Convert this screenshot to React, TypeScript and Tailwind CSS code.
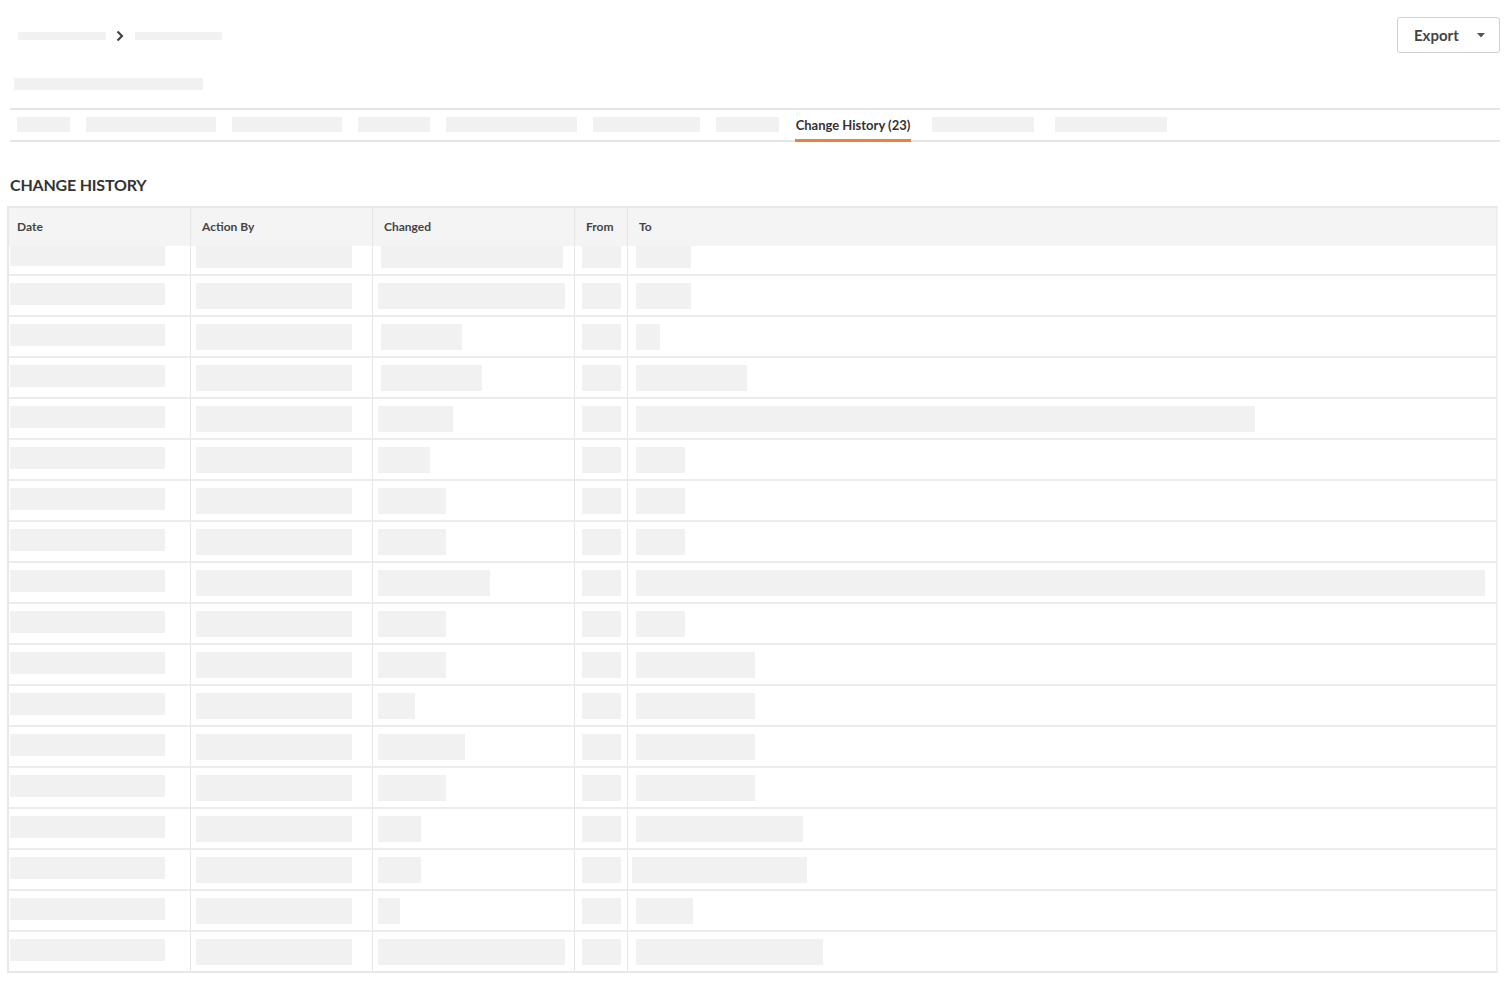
import React from "react";

type Row = {
  h: number;
  changed: [number, number];
  to: [number, number];
};

const rows: Row[] = [
  { h: 28, changed: [8, 182], to: [8, 55] },
  { h: 41, changed: [5, 187], to: [8, 55] },
  { h: 41, changed: [8, 81], to: [8, 24] },
  { h: 41, changed: [8, 101], to: [8, 111] },
  { h: 41, changed: [5, 75], to: [8, 619] },
  { h: 41, changed: [5, 52], to: [8, 49] },
  { h: 41, changed: [5, 68], to: [8, 49] },
  { h: 41, changed: [5, 68], to: [8, 49] },
  { h: 41, changed: [5, 112], to: [8, 849] },
  { h: 41, changed: [5, 68], to: [8, 49] },
  { h: 41, changed: [5, 68], to: [8, 119] },
  { h: 41, changed: [5, 37], to: [8, 119] },
  { h: 41, changed: [5, 87], to: [8, 119] },
  { h: 41, changed: [5, 68], to: [8, 119] },
  { h: 41, changed: [5, 43], to: [8, 167] },
  { h: 41, changed: [5, 43], to: [4, 175] },
  { h: 41, changed: [5, 22], to: [8, 57] },
  { h: 41, changed: [5, 187], to: [8, 187] },
];

const tabs = [
  [17, 53],
  [86, 130],
  [232, 110],
  [358, 72],
  [446, 131],
  [593, 107],
  [716, 63],
];

function Ph({ w, h, ml }: { w: number; h: number; ml: number }) {
  return (
    <div
      className="bg-[#f1f1f1]"
      style={{ width: w, height: h, marginLeft: ml }}
    />
  );
}

export default function App() {
  return (
    <div
      className="w-[1504px] h-[982px] bg-white overflow-hidden text-[#333]"
      style={{ fontFamily: "Lato, 'Open Sans', sans-serif" }}
    >
      {/* Top bar */}
      <div className="flex items-start justify-between pt-[17px]">
        <div className="flex items-center pl-[18px] pt-[13px] gap-[9px]">
          <div className="w-[88px] h-[8px] bg-[#f1f1f1]" />
          <svg width="8" height="12" viewBox="0 0 8 12" className="mx-[1px]">
            <path d="M1.5 1.5 L6 6 L1.5 10.5" stroke="#444" strokeWidth="2.2" fill="none" />
          </svg>
          <div className="w-[87px] h-[8px] bg-[#f1f1f1] ml-[1px]" />
        </div>
        <button className="mr-[4px] w-[103px] h-[36px] border border-[#d0d0d0] rounded-[3px] flex items-center pl-[16px] text-[15px] font-bold text-[#444]">
          Export
          <svg width="8" height="5" viewBox="0 0 8 5" className="ml-[18px]">
            <path d="M0 0 L8 0 L4 4.5 Z" fill="#555" />
          </svg>
        </button>
      </div>

      {/* Title placeholder */}
      <div className="pl-[14px] mt-[25px]">
        <div className="w-[189px] h-[12px] bg-[#f1f1f1]" />
      </div>

      {/* Tabs */}
      <div className="ml-[10px] mr-[4px] mt-[18px] h-[34px] border-t-2 border-b-2 border-[#e4e4e4] relative">
        {tabs.map(([x, w], i) => (
          <div
            key={i}
            className="absolute top-[7px] h-[15px] bg-[#f1f1f1]"
            style={{ left: x - 10, width: w }}
          />
        ))}
        <div className="absolute left-[785px] top-0 h-[32px] w-[116px] flex flex-col items-center">
          <div className="text-[13px] font-bold text-[#333] leading-none mt-[9px] whitespace-nowrap">
            Change History (23)
          </div>
          <div className="absolute bottom-0 left-0 right-0 h-[3px] bg-[#f07e3d]" />
        </div>
        <div className="absolute top-[7px] h-[15px] bg-[#f1f1f1] left-[922px] w-[102px]" />
        <div className="absolute top-[7px] h-[15px] bg-[#f1f1f1] left-[1045px] w-[112px]" />
      </div>

      {/* Section heading */}
      <div className="pl-[10px] mt-[35px] text-[16px] font-bold text-[#333] tracking-[-0.2px] leading-none">
        CHANGE HISTORY
      </div>

      {/* Table */}
      <div className="ml-[7px] w-[1491px] mt-[13px] border-2 border-[#e8e8e8] border-r-[#efefef]">
        <div className="grid grid-cols-[182px_182px_202px_53px_1fr] h-[38px] bg-[#f4f4f4] text-[12px] font-bold text-[#444]">
          <div className="border-r border-[#e6e6e6] flex items-center pl-[8px]">Date</div>
          <div className="border-r border-[#e6e6e6] flex items-center pl-[11px]">Action By</div>
          <div className="border-r border-[#e6e6e6] flex items-center pl-[11px]">Changed</div>
          <div className="border-r border-[#e6e6e6] flex items-center pl-[11px]">From</div>
          <div className="flex items-center pl-[11px]">To</div>
        </div>
        {rows.map((r, i) => (
          <div
            key={i}
            className={`grid grid-cols-[182px_182px_202px_53px_1fr] ${i > 0 ? "border-t-2 border-[#ececec]" : ""}`}
            style={{ height: r.h }}
          >
            <div className={`border-r border-[#e6e6e6] flex ${i === 0 ? "items-start" : "items-center"} pb-[4px]`}>
              <Ph w={155} h={i === 0 ? 20 : 22} ml={1} />
            </div>
            <div className={`border-r border-[#e6e6e6] flex ${i === 0 ? "items-start" : "items-center"}`}>
              <Ph w={156} h={i === 0 ? 22 : 26} ml={5} />
            </div>
            <div className={`border-r border-[#e6e6e6] flex ${i === 0 ? "items-start" : "items-center"}`}>
              <Ph w={r.changed[1]} h={i === 0 ? 22 : 26} ml={r.changed[0]} />
            </div>
            <div className={`border-r border-[#e6e6e6] flex ${i === 0 ? "items-start" : "items-center"}`}>
              <Ph w={39} h={i === 0 ? 22 : 26} ml={7} />
            </div>
            <div className={`flex ${i === 0 ? "items-start" : "items-center"}`}>
              <Ph w={r.to[1]} h={i === 0 ? 22 : 26} ml={r.to[0]} />
            </div>
          </div>
        ))}
      </div>
    </div>
  );
}
